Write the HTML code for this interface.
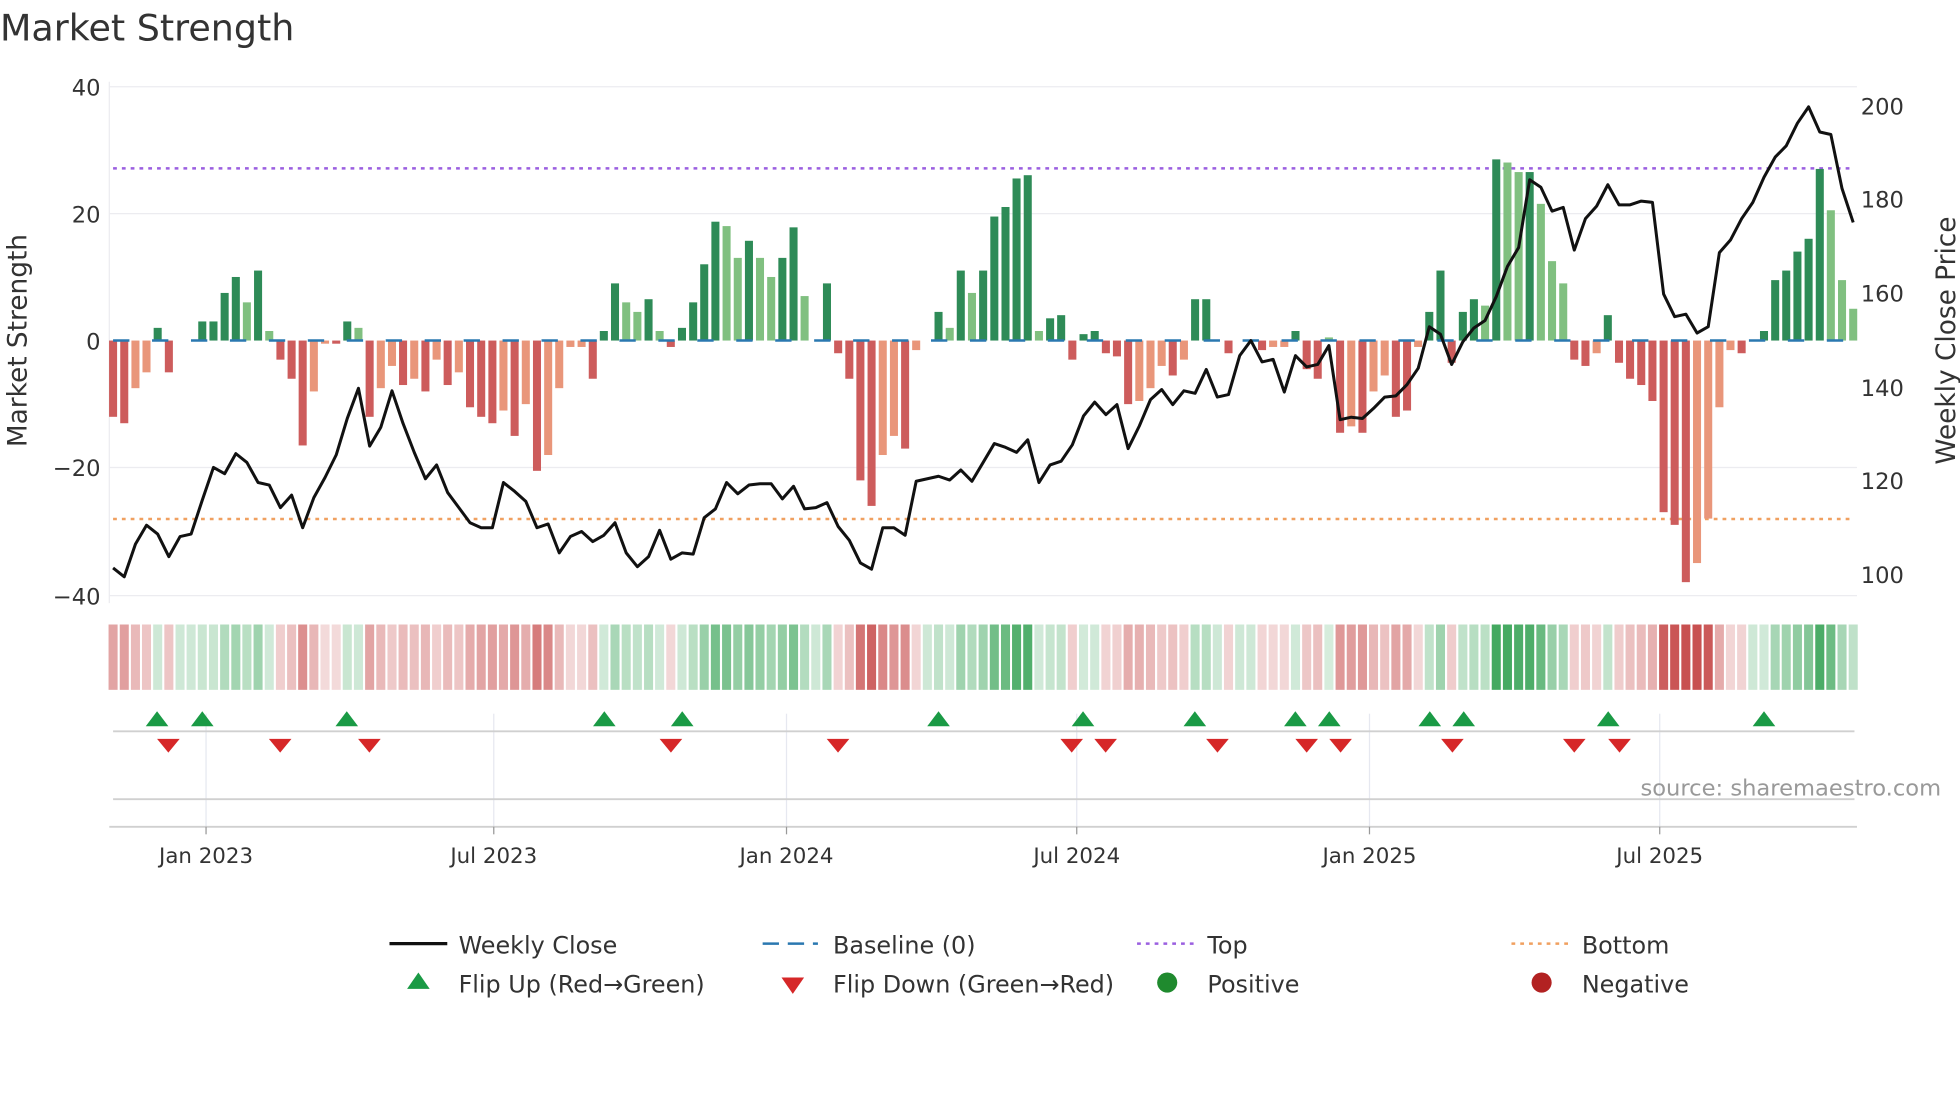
<!DOCTYPE html>
<html><head><meta charset="utf-8"><style>
html,body{margin:0;padding:0;background:#fff;}
svg{display:block;font-family:"DejaVu Sans","Liberation Sans",sans-serif;}
</style></head><body>
<svg id="s" width="1960" height="1102" viewBox="0 0 1560 877" xmlns="http://www.w3.org/2000/svg">
<rect width="1560" height="877" fill="#fff"/>
<text x="0" y="32" font-size="29" fill="#333">Market Strength</text>
<g stroke="#ececf0" stroke-width="1">
<line x1="87" y1="69" x2="1478" y2="69"/><line x1="87" y1="170" x2="1478" y2="170"/>
<line x1="87" y1="372" x2="1478" y2="372"/><line x1="87" y1="474" x2="1478" y2="474"/>
<line x1="87" y1="65" x2="87" y2="480"/>
</g>
<g font-size="18" fill="#333" text-anchor="end">
<text x="80" y="76">40</text><text x="80" y="177">20</text><text x="80" y="278">0</text>
<text x="80" y="379">−20</text><text x="80" y="481">−40</text>
</g>
<g font-size="18" fill="#333">
<text x="1481" y="91">200</text><text x="1481" y="165">180</text><text x="1481" y="240">160</text>
<text x="1481" y="315">140</text><text x="1481" y="389">120</text><text x="1481" y="464">100</text>
</g>
<text transform="translate(21,271) rotate(-90)" font-size="21" fill="#333" text-anchor="middle">Market Strength</text>
<text transform="translate(1556,271) rotate(-90)" font-size="21" fill="#333" text-anchor="middle">Weekly Close Price</text>
<line x1="90" y1="134" x2="1476" y2="134" stroke="#9b5fe0" stroke-width="2" stroke-dasharray="3 4"/>
<line x1="90" y1="413" x2="1476" y2="413" stroke="#f0a060" stroke-width="2" stroke-dasharray="3 4"/>
<g id="bars"></g>
<line x1="90" y1="271" x2="1476" y2="271" stroke="#2a78b0" stroke-width="2" stroke-dasharray="13 18"/>
<polyline id="price" fill="none" stroke="#111" stroke-width="2.4" stroke-linejoin="round"/>
<g id="heat"></g>
<g stroke="#e6e8f0" stroke-width="1">
<line x1="164" y1="568" x2="164" y2="658"/><line x1="393" y1="568" x2="393" y2="658"/>
<line x1="626" y1="568" x2="626" y2="658"/><line x1="857" y1="568" x2="857" y2="658"/>
<line x1="1090" y1="568" x2="1090" y2="658"/><line x1="1321" y1="568" x2="1321" y2="658"/>
</g>
<line x1="90" y1="582" x2="1476" y2="582" stroke="#d0d0d0" stroke-width="1.5"/>
<line x1="90" y1="636" x2="1476" y2="636" stroke="#d0d0d0" stroke-width="1.5"/>
<line x1="87" y1="658" x2="1478" y2="658" stroke="#d0d0d0" stroke-width="1.5"/>
<g stroke="#999" stroke-width="1">
<line x1="164" y1="658" x2="164" y2="664"/><line x1="393" y1="658" x2="393" y2="664"/>
<line x1="626" y1="658" x2="626" y2="664"/><line x1="857" y1="658" x2="857" y2="664"/>
<line x1="1090" y1="658" x2="1090" y2="664"/><line x1="1321" y1="658" x2="1321" y2="664"/>
</g>
<g id="flips"></g>
<text x="1545" y="633" font-size="18" fill="#999" text-anchor="end">source: sharemaestro.com</text>
<g font-size="17" fill="#333" text-anchor="middle">
<text x="164" y="687">Jan 2023</text><text x="393" y="687">Jul 2023</text><text x="626" y="687">Jan 2024</text>
<text x="857" y="687">Jul 2024</text><text x="1090" y="687">Jan 2025</text><text x="1321" y="687">Jul 2025</text>
</g>
<g font-size="19" fill="#333">
<line x1="310" y1="751" x2="356" y2="751" stroke="#111" stroke-width="2.5"/>
<text x="365" y="759">Weekly Close</text>
<line x1="607" y1="751" x2="651" y2="751" stroke="#2a78b0" stroke-width="2" stroke-dasharray="13 7"/>
<text x="663" y="759">Baseline (0)</text>
<line x1="905" y1="751" x2="950" y2="751" stroke="#9b5fe0" stroke-width="2" stroke-dasharray="3 4"/>
<text x="961" y="759">Top</text>
<line x1="1203" y1="751" x2="1248" y2="751" stroke="#f0a060" stroke-width="2" stroke-dasharray="3 4"/>
<text x="1259" y="759">Bottom</text>
<polygon points="324,787 342,787 333,774" fill="#1a9a45"/>
<text x="365" y="790">Flip Up (Red→Green)</text>
<polygon points="622,778 640,778 631,791" fill="#d62728"/>
<text x="663" y="790">Flip Down (Green→Red)</text>
<circle cx="929" cy="782" r="8" fill="#1f8a2e"/>
<text x="961" y="790">Positive</text>
<circle cx="1227" cy="782" r="8" fill="#b22222"/>
<text x="1259" y="790">Negative</text>
</g>
</svg>
<script>
var NS="http://www.w3.org/2000/svg";
var d="-12R -13R -7.5r -5r 2G -5R 0G 0G 3G 3G 7.5G 10G 6g 11G 1.5g -3R -6R -16.5R -8r -0.5r -0.5R 3G 2g -12R -7.5r -4r -7R -6r -8R -3r -7R -5r -10.5R -12R -13R -11r -15R -10r -20.5R -18r -7.5r -1r -1r -6R 1.5G 9G 6g 4.5g 6.5G 1.5g -1R 2G 6G 12G 18.7G 18g 13g 15.7G 13g 10g 13G 17.8G 7g 0G 9G -2R -6R -22R -26R -18r -15r -17R -1.5r 0G 4.5G 2g 11G 7.5g 11G 19.5G 21G 25.5G 26G 1.5g 3.5G 4G -3R 1G 1.5G -2R -2.5R -10R -9.5r -7.5r -4r -5.5R -3r 6.5G 6.5G 0G -2R 0G 0G -1.5R -1r -1r 1.5G -4.5R -6R 0.5g -14.5R -13.5r -14.5R -8r -5.5r -12R -11R -1r 4.5G 11G -3.5R 4.5G 6.5G 5.5g 28.5G 28g 26.5g 26.5G 21.5g 12.5g 9g -3R -4R -2r 4G -3.5R -6R -7R -9.5R -27R -29R -38R -35r -28r -10.5r -1.5r -2R 0G 1.5G 9.5G 11G 14G 16G 27G 20.5g 9.5g 5g".split(" ");
var col={G:"#2e8b57",g:"#80c080",R:"#cd5c5c",r:"#e9967a"};
var bars=document.getElementById("bars"),heat=document.getElementById("heat");
var n=d.length,pitch=(1475-90)/(n-1);
for(var i=0;i<n;i++){
 var v=parseFloat(d[i]),t=d[i].slice(-1),x=90+pitch*i;
 if(Math.abs(v)>0.05){
  var r=document.createElementNS(NS,"rect");
  var y0=271,h=Math.abs(v)*5.06;
  r.setAttribute("x",(x-3.2).toFixed(1));r.setAttribute("width","6.4");
  r.setAttribute("y",(v>0?y0-h:y0).toFixed(1));r.setAttribute("height",h.toFixed(1));
  r.setAttribute("fill",col[t]);bars.appendChild(r);
 }
 var c=document.createElementNS(NS,"rect");
 c.setAttribute("x",(x-3.6).toFixed(1));c.setAttribute("width","7.2");
 c.setAttribute("y","497");c.setAttribute("height","52");
 var a=Math.min(1,0.2+Math.abs(v)/30*0.8);
 if(v>=0){c.setAttribute("fill","rgb(60,165,90)");}else{c.setAttribute("fill","rgb(200,80,80)");}
 if(Math.abs(v)<0.05)a=0.25;
 c.setAttribute("fill-opacity",a.toFixed(2));heat.appendChild(c);
}
var py=[452,459,433,418,425,443,427,425,398,372,377,361,368,384,386,404,394,420,396,380,362,333,309,355,340,311,337,360,381,370,392,404,416,420,420,384,391,399,420,417,440,427,423,431,426,416,440,451,443,422,445,440,441,412,405,384,393,386,385,385,397,387,405,404,400,419,430,448,453,420,420,426,383,381,379,382,374,383,368,353,356,360,350,384,370,367,354,331,320,330,322,357,339,318,310,322,311,313,294,316,314,283,271,288,286,312,283,292,290,275,334,332,333,325,316,315,306,293,260,266,290,272,261,255,236,212,197,143,149,168,165,199,174,164,147,163,163,160,161,234,252,250,265,260,201,191,174,161,141,125,116,98,85,105,107,150,177];
var pp=[],m=py.length,pp2=(1475-90)/(m-1);
for(var j=0;j<m;j++)pp.push((90+pp2*j).toFixed(1)+","+py[j]);
document.getElementById("price").setAttribute("points",pp.join(" "));
var fl=document.getElementById("flips");
[125,161,276,481,543,747,862,951,1031,1058,1138,1165,1280,1404].forEach(function(x){
 var p=document.createElementNS(NS,"polygon");p.setAttribute("points",(x-9)+",578 "+(x+9)+",578 "+x+",566");p.setAttribute("fill","#1a9a45");fl.appendChild(p);});
[134,223,294,534,667,853,880,969,1040,1067,1156,1253,1289].forEach(function(x){
 var p=document.createElementNS(NS,"polygon");p.setAttribute("points",(x-9)+",588 "+(x+9)+",588 "+x+",599");p.setAttribute("fill","#d62728");fl.appendChild(p);});
</script>
</body></html>
